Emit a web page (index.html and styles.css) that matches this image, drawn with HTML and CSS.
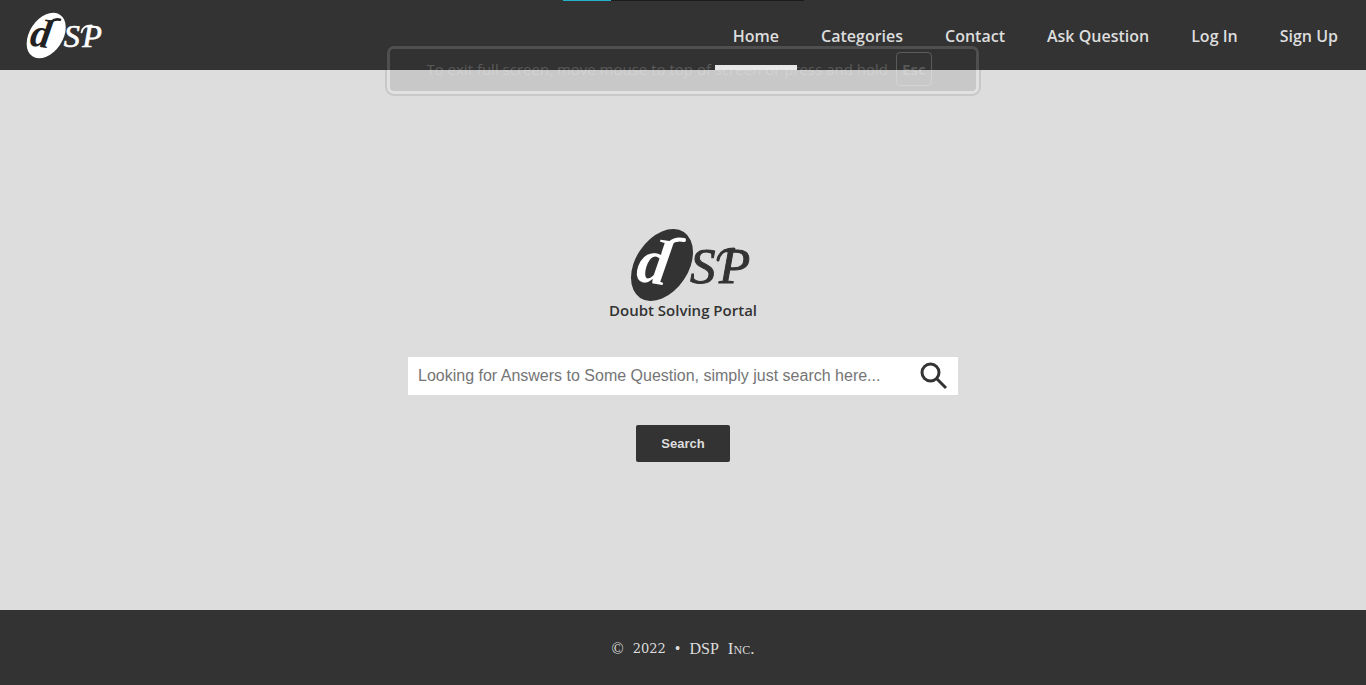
FILE: index.html
```html
<!DOCTYPE html>
<html lang="en">
<head>
<meta charset="utf-8">
<title>DSP - Doubt Solving Portal</title>
<link rel="stylesheet" href="styles.css">
</head>
<body>
<header class="header">
  <a class="brand" href="#" aria-label="DSP">
    <svg class="logo logo-small" viewBox="0 0 122 74">
      <ellipse class="logo-disc" cx="32" cy="37" rx="26.4" ry="39.5" transform="rotate(33.6 32 37)"/>
      <text class="logo-d" x="7" y="55" transform="rotate(9 22 40)">d</text>
      <path class="logo-swash-d" d="M40 15 Q46 10 54 12"/>
      <text class="logo-sp" x="60 89" y="55">SP</text>
      <path class="logo-swash" d="M88 32 Q90 21 104 21"/>
    </svg>
  </a>
  <nav class="nav">
    <a class="nav-link active" href="#">Home</a>
    <a class="nav-link" href="#">Categories</a>
    <a class="nav-link" href="#">Contact</a>
    <a class="nav-link" href="#">Ask Question</a>
    <a class="nav-link" href="#">Log In</a>
    <a class="nav-link" href="#">Sign Up</a>
  </nav>
</header>

<main class="main">
  <svg class="logo logo-large" viewBox="0 0 122 74" aria-hidden="true">
    <ellipse class="logo-disc" cx="32" cy="37" rx="26.4" ry="39.5" transform="rotate(33.6 32 37)"/>
    <text class="logo-d" x="7" y="55" transform="rotate(9 22 40)">d</text>
    <path class="logo-swash-d" d="M40 15 Q46 10 54 12"/>
    <text class="logo-sp" x="60 89" y="55">SP</text>
    <path class="logo-swash" d="M88 32 Q90 21 104 21"/>
  </svg>
  <h1 class="title">Doubt Solving Portal</h1>
  <form class="search">
    <div class="search-box">
      <input class="search-input" type="text" aria-label="Search questions" placeholder="Looking for Answers to Some Question, simply just search here...">
      <svg class="search-icon" viewBox="0 0 28 28" aria-hidden="true">
        <circle cx="10.5" cy="10.5" r="8.5"/>
        <path d="M16.5 16.5 L26 26"/>
      </svg>
    </div>
    <button class="search-button" type="button">Search</button>
  </form>
</main>

<footer class="footer">
  <span>©</span><span class="year">2022</span><span>•</span><span>DSP</span><span class="caps">Inc.</span>
</footer>

<div class="progress"><div class="progress-fill"></div></div>
<div class="toast">
  <span>To exit full screen, move mouse to top of screen or press and hold</span>
  <kbd class="key">Esc</kbd>
</div>
</body>
</html>
```
FILE: styles.css
```css
* {
  box-sizing: border-box;
}

body {
  margin: 0;
  min-height: 100vh;
  display: flex;
  flex-direction: column;
  background: #ddd;
  color: #333;
  font-family: "Open Sans", "Noto Sans", sans-serif;
}

.header {
  height: 70px;
  padding: 0 10px 0 26px;
  display: flex;
  align-items: center;
  justify-content: space-between;
  background: #333;
}

.brand {
  display: flex;
}

.logo {
  overflow: visible;
}

.logo-small {
  width: 77px;
  height: 47px;
  --disc: #fff;
  --letter: #222;
  --word: #fff;
}

.logo-large {
  width: 122px;
  height: 74px;
  margin-left: 16px;
  --disc: #333;
  --letter: #fff;
  --word: #333;
}

.logo-disc {
  fill: var(--disc);
}

.logo-d {
  font: italic bold 64px "Liberation Serif", serif;
  fill: var(--letter);
}

.logo-sp {
  font: italic 51px "Liberation Serif", serif;
  fill: var(--word);
  stroke: var(--word);
  stroke-width: 1;
}

.logo-swash,
.logo-swash-d {
  fill: none;
  stroke: var(--word);
  stroke-width: 3;
  stroke-linecap: round;
}

.logo-swash-d {
  stroke: var(--letter);
  stroke-width: 4;
}

.nav {
  height: 100%;
  display: flex;
  gap: 6px;
}

.nav-link {
  display: flex;
  align-items: center;
  padding: 6px 18px 0;
  border-bottom: 5px solid transparent;
  color: #ddd;
  font-size: 16px;
  font-weight: 600;
  text-decoration: none;
}

.nav-link.active {
  border-color: #fff;
}

.main {
  flex: 1;
  display: flex;
  flex-direction: column;
  align-items: center;
  justify-content: center;
  padding: 10px 20px 0;
}

.title {
  margin: 0;
  font-size: 15px;
  font-weight: 600;
  line-height: 16px;
}

.search {
  width: 100%;
  max-width: 550px;
  margin-top: 39px;
  display: flex;
  flex-direction: column;
  align-items: center;
  gap: 30px;
}

.search-box {
  width: 100%;
  height: 38px;
  padding: 0 10px;
  display: flex;
  align-items: center;
  background: #fff;
}

.search-input {
  flex: 1;
  min-width: 0;
  padding: 0;
  border: 0;
  outline: 0;
  background: transparent;
  color: #333;
  font: 16px "Liberation Sans", Arial, sans-serif;
}

.search-input::placeholder {
  color: #757575;
}

.search-icon {
  width: 28px;
  height: 28px;
  fill: none;
  stroke: #333;
  stroke-width: 3;
}

.search-button {
  padding: 11px 25px;
  border: 0;
  border-radius: 2px;
  background: #333;
  color: #ddd;
  font: bold 13px/15px "Liberation Sans", Arial, sans-serif;
}

.footer {
  height: 75px;
  padding-top: 2px;
  display: flex;
  align-items: center;
  justify-content: center;
  gap: 9px;
  background: #333;
  color: #ddd;
  font: 16px "Liberation Serif", Georgia, serif;
}

.year {
  font: 13px "DejaVu Serif", serif;
}

.caps {
  font-size: 17px;
  font-variant: small-caps;
}

.progress {
  position: absolute;
  top: 0;
  left: 50%;
  width: 241px;
  height: 1px;
  margin-left: -120px;
  background: #1c1c1c;
}

.progress-fill {
  width: 20%;
  height: 100%;
  background: #22b1c9;
}

.toast {
  position: absolute;
  top: 46px;
  left: 50%;
  transform: translateX(-50%);
  width: 592px;
  height: 48px;
  padding: 0 8px 2px 0;
  display: flex;
  align-items: center;
  justify-content: center;
  gap: 8px;
  border: 3px solid rgba(255, 255, 255, 0.14);
  border-radius: 7px;
  background: rgba(51, 51, 51, 0.12) padding-box;
  box-shadow: 0 0 0 2px rgba(51, 51, 51, 0.12);
  color: rgba(255, 255, 255, 0.2);
  font-size: 15px;
  white-space: nowrap;
  pointer-events: none;
}

.key {
  height: 34px;
  padding: 0 5px;
  display: flex;
  align-items: center;
  border: 1px solid rgba(255, 255, 255, 0.2);
  border-radius: 4px;
  font: bold 15px "Open Sans", sans-serif;
}
```
